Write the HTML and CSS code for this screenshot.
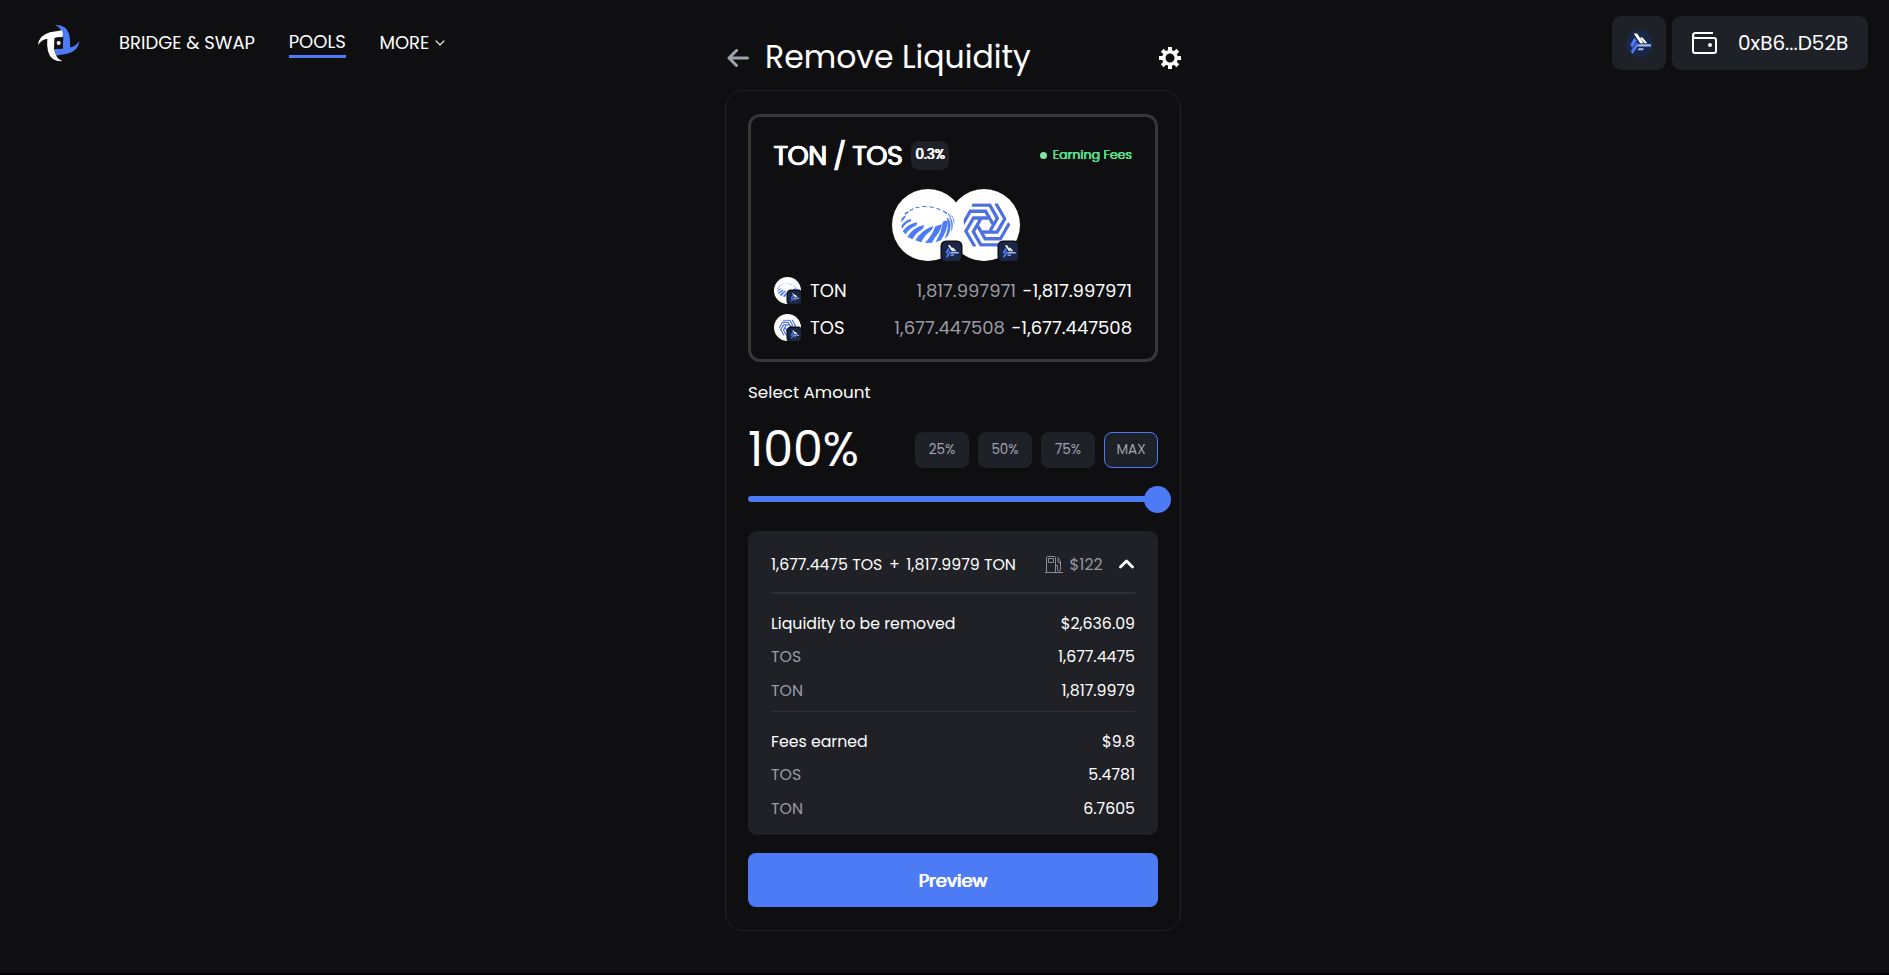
FILE: index.html
```
<!DOCTYPE html>
<html lang="en">
<head>
<meta charset="utf-8">
<title>Remove Liquidity</title>
<link rel="stylesheet" href="styles.css">
</head>
<body>
<svg class="defs" aria-hidden="true">
  <defs>
    <symbol id="titan" viewBox="0 0 80 80">
      <path fill="#fff" d="M23 10h10l19 29h-10zM41 22h8l14 17h-8z"/>
      <path fill="#9dbcff" d="M36 42h38v7H32zM38 54h15l-3 6H34z"/>
      <path fill="#4d7af5" d="M25 22l7 9-14 22-5-9zM32 36l6 8-18 26-6-6z"/>
    </symbol>
    <symbol id="ton" viewBox="0 0 216 216">
      <circle cx="108" cy="108" r="108" fill="#fff"/>
      <g transform="translate(12 33)" fill="#4d7af5">
        <path d="M15 66Q15 52 29 46Q32 51 15 66zM16 79Q24 62 45 57Q48 62 42 65Q27 70 19 86zM20 94Q36 72 62 67Q66 72 58 78Q40 85 29 103zM34 110Q52 82 84 75Q84 84 77 89Q60 98 49 118zM58 121Q76 91 111 78Q112 86 103 94Q86 105 76 127zM87 129Q110 103 117 80Q126 75 138 73Q137 86 128 98Q116 112 108 128zM118 127Q138 96 140 66Q151 59 154 66Q155 90 135 121zM145 116Q161 88 152 53Q162 56 164 74Q164 92 156 107zM165 96Q170 68 158 49Q167 54 170 68Q171 78 169 87zM174 78Q175 59 163 42Q179 57 174 78z"/>
        <path d="M25 41l10-8 3 4-9 7zM40 30l12-5 1 3-10 5zM58 22l12-2v3l-10 2zM78 18h14v3H79zM100 19l14 2-1 3-13-2zM122 23l12 5-2 3-11-5zM142 31l12 8-2 4-11-8zM157 40l9 10-2 2-9-9z"/>
      </g>
    </symbol>
    <symbol id="tos" viewBox="0 0 216 216">
      <clipPath id="hex"><path d="M-75 0L-37.500-65H37.500L75 0L37.500 65H-37.500z"/></clipPath>
      <circle cx="108" cy="108" r="108" fill="#fff"/>
      <g transform="translate(112 108)"><g clip-path="url(#hex)" fill="none" stroke="#4d72e0" stroke-width="10">
        <path id="arm" d="M-41-60H13L36-20L14 18"/>
        <use href="#arm" transform="rotate(60)"/><use href="#arm" transform="rotate(120)"/><use href="#arm" transform="rotate(180)"/><use href="#arm" transform="rotate(240)"/><use href="#arm" transform="rotate(300)"/>
      </g></g>
    </symbol>
    <path id="logo-half" d="M12 82Q13 53 48 43Q68 40 84 37Q88 48 86 58Q72 56 62 60L60 92Q64 120 85 130Q50 131 42 100Q38 80 40 62Q22 64 12 82z"/>
  </defs>
</svg>
<div class="page">
  <header class="left">
    <svg class="logo" viewBox="0 0 150 150"><use href="#logo-half" fill="#4d7af5" transform="rotate(180 74 75)"/><use href="#logo-half" fill="#fff"/><path d="M62 60h25v32H62z" fill="#0f0f12"/><circle cx="74" cy="75" r="6" fill="#fff"/></svg>
    <nav class="nav">
      <a class="nav-link">BRIDGE &amp; SWAP</a>
      <a class="nav-link active">POOLS</a>
      <a class="nav-link more">MORE<svg class="caret" viewBox="0 0 10 6"><path d="M.7.7L5 5 9.300.7"/></svg></a>
    </nav>
  </header>
  <main class="main">
    <div class="title-row">
      <svg class="back" viewBox="0 0 22 18"><path d="M9.500 1.500L2 9l7.500 7.500M2 9h18.500"/></svg>
      <h1 class="title">Remove Liquidity</h1>
      <svg class="gear" viewBox="0 0 22 22"><circle cx="11" cy="11" r="6.200" fill="none" stroke="#fff" stroke-width="3.400"/><g stroke="#fff" stroke-width="4"><path id="tooth" d="M11 0v4M11 18v4"/><use href="#tooth" transform="rotate(45 11 11)"/><use href="#tooth" transform="rotate(90 11 11)"/><use href="#tooth" transform="rotate(135 11 11)"/></g></svg>
    </div>
    <div class="card">
      <section class="pool">
        <div class="pool-head">
          <h2 class="pair">TON / TOS</h2>
          <div class="fee">0.3%</div>
          <div class="status"><i class="dot"></i><span>Earning Fees</span></div>
        </div>
        <div class="coins">
          <div class="coin"><svg class="coin-img"><use href="#ton"/></svg><div class="chain"><svg><use href="#titan"/></svg></div></div>
          <div class="coin second"><svg class="coin-img"><use href="#tos"/></svg><div class="chain"><svg><use href="#titan"/></svg></div></div>
        </div>
        <div class="token">
          <div class="coin small"><svg class="coin-img"><use href="#ton"/></svg><div class="chain"><svg><use href="#titan"/></svg></div></div>
          <span class="name">TON</span>
          <span class="muted">1,817.997971</span>
          <span class="delta">-1,817.997971</span>
        </div>
        <div class="token">
          <div class="coin small"><svg class="coin-img"><use href="#tos"/></svg><div class="chain"><svg><use href="#titan"/></svg></div></div>
          <span class="name">TOS</span>
          <span class="muted">1,677.447508</span>
          <span class="delta">-1,677.447508</span>
        </div>
      </section>
      <div class="label">Select Amount</div>
      <div class="amount">
        <div class="percent">100%</div>
        <div class="presets">
          <button>25%</button><button>50%</button><button>75%</button><button class="selected">MAX</button>
        </div>
      </div>
      <div class="slider"><div class="track"></div><div class="thumb"></div></div>
      <section class="details">
        <div class="summary">
          <span>1,677.4475 TOS</span><span class="plus">+</span><span>1,817.9979 TON</span>
          <svg class="gas" viewBox="0 0 18 17"><path d="M0 16.500h18M1.500 16V1.500q0-1 1-1h7q1 0 1 1V16M3.500 2.500h5v4h-5zM10.500 9.500h2v4q0 1.500 1.500 1.500t1.500-1.500V5.500L12.500 1M13 3v3l2.500 1.500"/></svg>
          <span class="gas-cost">$122</span>
          <svg class="chev" viewBox="0 0 15 10"><path d="M1.500 8L7.500 2l6 6"/></svg>
        </div>
        <div class="group">
          <div class="row head"><span>Liquidity to be removed</span><b>$2,636.09</b></div>
          <div class="row"><span>TOS</span><b>1,677.4475</b></div>
          <div class="row"><span>TON</span><b>1,817.9979</b></div>
        </div>
        <div class="group">
          <div class="row head"><span>Fees earned</span><b>$9.8</b></div>
          <div class="row"><span>TOS</span><b>5.4781</b></div>
          <div class="row"><span>TON</span><b>6.7605</b></div>
        </div>
      </section>
      <button class="preview">Preview</button>
    </div>
  </main>
  <div class="wallet-bar">
    <div class="network"><svg viewBox="0 0 80 80"><circle cx="40" cy="40" r="40" fill="#1a2747"/><use href="#titan" width="80" height="80"/></svg></div>
    <div class="account"><svg class="wallet" viewBox="0 0 25 22"><path d="M21 1H3.500Q1 1 1 3.500V19q0 2 2 2h19q2 0 2-2V8q0-2-2-2H3.500Q1 6 1 3.500"/><circle cx="18" cy="13" r="2"/></svg><span>0xB6...D52B</span></div>
  </div>
</div>
</body>
</html>
```
FILE: styles.css
```
* { box-sizing: border-box; }
html { background: #000; }
body { margin: 0; background: #0f0f12; height: 973px; overflow: hidden; color: #fff; font-family: Poppins, Inter, "Liberation Sans", sans-serif; font-size: 16px; }
h1, h2 { margin: 0; font-weight: 400; }
button { font: inherit; border: 0; padding: 0; color: inherit; }
span, b, h1, h2 { white-space: nowrap; }
svg { display: block; flex: none; }
.defs { position: absolute; width: 0; height: 0; }
.page { display: flex; height: 973px; background: #0f0f12; }

.left { width: 725px; height: 86px; padding-left: 34px; display: flex; align-items: center; flex: none; }
.logo { width: 50px; height: 50px; margin-bottom: 1px; }
.nav { display: flex; align-items: flex-start; margin-left: 35px; gap: 33.700px; font-size: 18px; line-height: 28px; }
.nav-link { display: flex; align-items: center; }
.nav-link.active { line-height: 26px; border-bottom: 3px solid #4d7af5; }
.caret { width: 10px; height: 6px; margin-left: 6px; fill: none; stroke: #fff; stroke-width: 1.200; }

.main { width: 456px; flex: none; padding-top: 24px; }
.title-row { height: 66px; display: flex; align-items: center; padding: 2px 0 0 2px; }
.back { width: 22px; height: 18px; fill: none; stroke: #a0a3ad; stroke-width: 3; stroke-linecap: round; stroke-linejoin: round; }
.title { font-size: 31.500px; line-height: 40px; margin: 0 0 2px 16px; }
.gear { width: 22px; height: 22px; margin-left: auto; }

.card { height: 841px; border: 1px solid #20212a; border-radius: 18px; padding: 23px 22px 22px; }
.pool { height: 248px; border: 3px solid #383736; border-radius: 12px; padding: 24px 23px 0; }
.pool-head { height: 29px; display: flex; align-items: center; }
.pair, .fee, .preview { text-shadow: .5px 0 currentColor, -.5px 0 currentColor; }
.pair { font-size: 27px; line-height: 29px; letter-spacing: -.55px; margin: -1px 0 0 -.500px; -webkit-text-stroke: .5px #fff; }
.fee { width: 38px; height: 29px; margin-left: 9px; border-radius: 8px; background: #1f2128; display: flex; align-items: center; justify-content: center; font-size: 13.500px; padding-bottom: 1px; }
.status { margin-left: auto; display: flex; align-items: center; gap: 6px; color: #58dc87; font-size: 12.600px; padding-bottom: 1px; text-shadow: .4px 0 currentColor, -.3px 0 currentColor; }
.dot { width: 7px; height: 7px; border-radius: 50%; background: #80e8a2; }
.coins { display: flex; justify-content: center; margin: 19px 0 16px 5px; }
.coin { position: relative; width: 72px; height: 72px; }
.coin.second { margin-left: -16px; }
.coin-img { width: 100%; height: 100%; }
.coins .coin:first-child { z-index: 1; }
.chain { position: absolute; right: 1px; bottom: 0; border-radius: 4px; background: #1a2747; box-shadow: 0 0 0 1.500px #0f0f12; display: flex; align-items: center; justify-content: center; }
.coins .chain { width: 19px; height: 19px; right: 3px; }
.coins .second .chain { right: 2px; }
.chain svg { width: 17px; height: 17px; }
.coin.small { width: 27px; height: 27px; }
.small .chain { width: 13px; height: 13px; right: 0; border-radius: 3px; }
.small .chain svg { width: 11px; height: 11px; }
.token { height: 27px; margin-bottom: 10px; display: flex; align-items: center; font-size: 18px; }
.name { margin-left: 9px; }
.muted { margin-left: auto; color: #9a9ca6; }
.delta { margin-left: 6.500px; }

.label { margin-top: 18px; height: 24px; line-height: 24px; font-size: 16.800px; }
.amount { display: flex; align-items: center; justify-content: space-between; height: 36px; margin-top: 28px; }
.percent { font-size: 47.500px; line-height: 36px; }
.presets { display: flex; gap: 9px; }
.presets button { width: 54px; height: 36px; border-radius: 8px; background: #1f2128; color: #a0a2ad; font-size: 13.500px; }
.presets .selected { border: 1px solid #4d7af5; }
.slider { display: flex; align-items: center; height: 27px; margin-top: 17.500px; margin-right: -13px; }
.track { flex: 1; height: 6px; border-radius: 3px; background: #4d7af5; margin-right: -14px; }
.thumb { width: 27px; height: 27px; border-radius: 50%; background: #4d7af5; }

.details { margin-top: 18.500px; height: 304px; border-radius: 9px; background: #202127; padding: 0 23px; font-size: 15.750px; }
.summary { height: 63px; border-bottom: 2px solid #2f3036; display: flex; align-items: center; padding-top: 5px; }
.plus { width: 24px; text-align: center; }
.gas { width: 18px; height: 17px; margin-left: auto; fill: none; stroke: #8a8c96; stroke-width: 1; }
.gas-cost { margin-left: 7px; color: #9597a1; }
.chev { width: 15px; height: 10px; margin: 0 1.500px 0 16px; fill: none; stroke: #fff; stroke-width: 2.800; stroke-linecap: round; stroke-linejoin: round; }
.group { padding-top: 13px; height: 117px; }
.group + .group { border-top: 1px solid #2f3036; }
.row { display: flex; align-items: center; justify-content: space-between; height: 33.500px; color: #9a9ca6; }
.row b { color: #fff; font-weight: 400; }
.row.head { color: #fff; height: 33px; }
.preview { display: block; width: 410px; height: 54px; margin-top: 18px; border-radius: 8px; background: #4d7af5; font-size: 18px; padding-top: 1px; }

.wallet-bar { margin: 16px 21px 0 auto; display: flex; gap: 6px; height: 54px; }
.network, .account { background: #1f2128; border-radius: 9px; display: flex; align-items: center; }
.network { width: 54px; justify-content: center; }
.network svg { width: 27px; height: 27px; }
.account { width: 196px; padding-left: 20px; font-size: 20px; }
.wallet { width: 25px; height: 22px; margin-right: 21px; fill: none; stroke: #fff; stroke-width: 2; }
.wallet circle { fill: #fff; stroke: none; }
```
